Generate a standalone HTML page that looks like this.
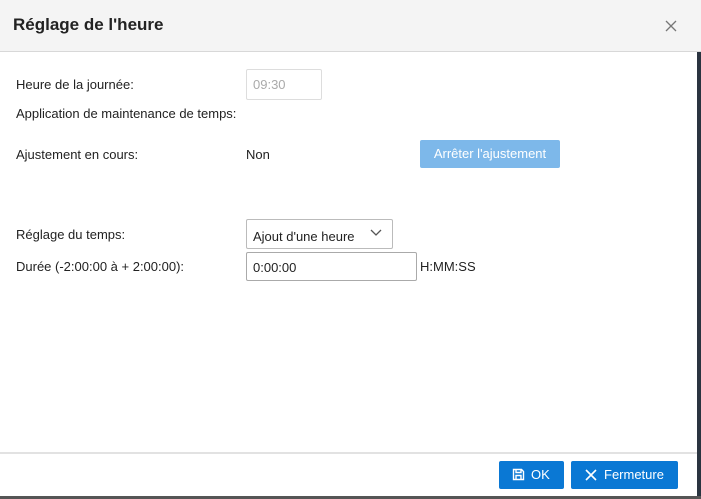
<!DOCTYPE html>
<html><head><meta charset="utf-8"><style>
*{margin:0;padding:0;box-sizing:border-box}
body{width:701px;height:499px;overflow:hidden;background:#fff;font-family:"Liberation Sans",Arial,sans-serif;font-size:13px;color:#222;position:relative}
.a{position:absolute;white-space:nowrap}
</style></head><body>
<div class="a" style="left:0;top:0;width:701px;height:52px;background:#f4f4f4;border-bottom:1px solid #d8d8d8"></div>
<div class="a" style="left:13px;top:15px;font-size:17px;font-weight:bold;color:#222">Réglage de l'heure</div>
<svg class="a" style="left:665px;top:20px" width="12" height="12" viewBox="0 0 12 12"><path d="M1 1L11 11M11 1L1 11" stroke="#777" stroke-width="1.3"/></svg>
<div class="a" style="left:697px;top:52px;width:4px;height:447px;background:#2a3440"></div>
<div class="a" style="left:0;top:496px;width:701px;height:3px;background:#555"></div>
<div class="a" style="left:16px;top:77px">Heure de la journée:</div>
<div class="a" style="left:246px;top:69px;width:76px;height:31px;border:1px solid #ddd;border-radius:2px;color:#aaa;padding:7px 0 0 6px">09:30</div>
<div class="a" style="left:16px;top:106px">Application de maintenance de temps:</div>
<div class="a" style="left:16px;top:147px">Ajustement en cours:</div>
<div class="a" style="left:246px;top:147px">Non</div>
<div class="a" style="left:420px;top:140px;width:140px;height:28px;background:#7db8ea;border-radius:2px;color:#fff;text-align:center;line-height:28px">Arrêter l'ajustement</div>
<div class="a" style="left:16px;top:227px">Réglage du temps:</div>
<div class="a" style="left:246px;top:219px;width:147px;height:30px;border:1px solid #bbb;border-radius:2px;padding:9px 0 0 6px">Ajout d'une heure</div>
<svg class="a" style="left:370px;top:229px" width="12" height="8" viewBox="0 0 12 8"><path d="M1 1L6 6L11 1" fill="none" stroke="#555" stroke-width="1.3"/></svg>
<div class="a" style="left:16px;top:259px">Durée (-2:00:00 à + 2:00:00):</div>
<div class="a" style="left:246px;top:252px;width:171px;height:29px;border:1px solid #aaa;border-radius:2px;padding:7px 0 0 6px">0:00:00</div>
<div class="a" style="left:420px;top:259px">H:MM:SS</div>
<div class="a" style="left:0;top:452px;width:697px;height:2px;background:#e2e2e2"></div>
<div class="a" style="left:499px;top:461px;width:65px;height:28px;background:#0a78d4;border-radius:2px;color:#fff;line-height:28px;padding-left:32px">OK</div>
<svg class="a" style="left:512px;top:468px" width="13" height="13" viewBox="0 0 13 13"><path d="M1.5 1.5H9.5L11.5 3.5V11.5H1.5Z M4 1.5V4.5H9V1.5 M4 11.5V7.5H9V11.5" fill="none" stroke="#fff" stroke-width="1.4"/></svg>
<div class="a" style="left:571px;top:461px;width:107px;height:28px;background:#0a78d4;border-radius:2px;color:#fff;line-height:28px;padding-left:33px">Fermeture</div>
<svg class="a" style="left:585px;top:469px" width="12" height="12" viewBox="0 0 12 12"><path d="M1 1L11 11M11 1L1 11" stroke="#fff" stroke-width="1.6"/></svg>
</body></html>
